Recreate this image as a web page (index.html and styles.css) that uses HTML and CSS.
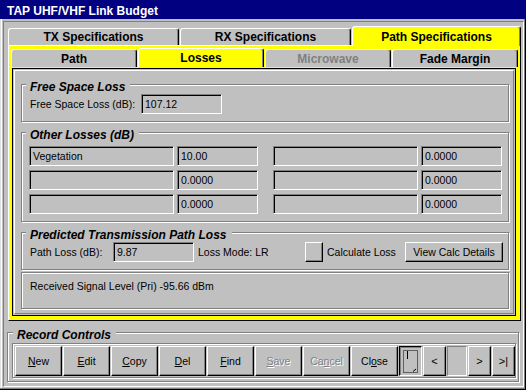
FILE: index.html
```html
<!DOCTYPE html>
<html>
<head>
<meta charset="utf-8">
<title>TAP UHF/VHF Link Budget</title>
<link rel="stylesheet" href="styles.css">
</head>
<body>
<div class="window">
  <div class="titlebar">TAP UHF/VHF Link Budget</div>
  <div class="client">
    <div class="tabs main-tabs">
      <div class="tab">TX Specifications</div>
      <div class="tab">RX Specifications</div>
      <div class="tab active">Path Specifications</div>
    </div>
    <div class="page">
      <div class="tabs sub-tabs">
        <div class="tab">Path</div>
        <div class="tab active">Losses</div>
        <div class="tab disabled">Microwave</div>
        <div class="tab">Fade Margin</div>
      </div>
      <div class="inner-page">
        <div class="inner-frame">
          <div class="group etched g-fsl">
            <div class="group-title">Free Space Loss</div>
            <div class="row">
              <span class="lbl w-fsl">Free Space Loss (dB):</span>
              <div class="field w-val">107.12</div>
            </div>
          </div>
          <div class="group etched g-other">
            <div class="group-title">Other Losses (dB)</div>
            <div class="loss-grid">
              <div class="field">Vegetation</div><div class="field">10.00</div><div></div><div class="field"></div><div class="field">0.0000</div>
              <div class="field"></div><div class="field">0.0000</div><div></div><div class="field"></div><div class="field">0.0000</div>
              <div class="field"></div><div class="field">0.0000</div><div></div><div class="field"></div><div class="field">0.0000</div>
            </div>
          </div>
          <div class="group etched g-pred">
            <div class="group-title">Predicted Transmission Path Loss</div>
            <div class="row">
              <span class="lbl w-pl">Path Loss (dB):</span>
              <div class="field w-val">9.87</div>
              <span class="lbl w-mode">Loss Mode: LR</span>
              <div class="btn chk"></div>
              <span class="lbl w-calc">Calculate Loss</span>
              <div class="btn vcd">View Calc Details</div>
            </div>
          </div>
          <div class="status etched">Received Signal Level (Pri) -95.66 dBm</div>
        </div>
      </div>
    </div>
    <div class="group etched record">
      <div class="group-title">Record Controls</div>
      <div class="rec-frame etched">
        <div class="btn rb"><span><u>N</u>ew</span></div>
        <div class="btn rb"><span><u>E</u>dit</span></div>
        <div class="btn rb"><span><u>C</u>opy</span></div>
        <div class="btn rb"><span><u>D</u>el</span></div>
        <div class="btn rb"><span><u>F</u>ind</span></div>
        <div class="btn rb dis"><span><u>S</u>ave</span></div>
        <div class="btn rb dis"><span>Ca<u>n</u>cel</span></div>
        <div class="btn rb"><span>Cl<u>o</u>se</span></div>
        <div class="btn nb pressed">
          <svg width="19" height="26" viewBox="0 0 19 26">
            <rect x="2.5" y="2.5" width="14" height="22" fill="none" stroke="#000" stroke-width="1" stroke-dasharray="1 1"/>
            <line x1="6.5" y1="3" x2="6.5" y2="11" stroke="#000" stroke-width="1"/>
            <line x1="12" y1="23.5" x2="15" y2="21" stroke="#000" stroke-width="1"/>
          </svg>
        </div>
        <div class="btn nb">&lt;</div>
        <div class="nav-field"></div>
        <div class="btn nb">&gt;</div>
        <div class="btn nb">&gt;|</div>
      </div>
    </div>
  </div>
</div>
</body>
</html>
```

FILE: styles.css
```css
* { box-sizing: border-box; }
html, body { margin: 0; padding: 0; }
body {
  width: 526px;
  height: 390px;
  overflow: hidden;
  background: #c0c0c0;
  font-family: "Liberation Sans", Arial, sans-serif;
  font-size: 10.5px;
  color: #000;
}
.window {
  width: 526px;
  height: 390px;
  display: flex;
  flex-direction: column;
  background: #c0c0c0;
  box-shadow: inset -1px -1px 0 #000, inset -2px -2px 0 #808080, inset 1px 0 0 #dfdfdf, inset 2px 0 0 #fff;
}
.titlebar {
  height: 19px;
  flex: none;
  background: #000080;
  color: #fff;
  font-weight: bold;
  font-size: 12px;
  line-height: 15px;
  padding: 4px 0 0 7px;
  white-space: nowrap;
}
.client {
  flex: 1;
  margin: 2px 2px 3px 3px;
  border: 1px solid;
  border-color: #808080 #fff #fff #808080;
  padding: 4px 0 0 3px;
}

/* tabs */
.tabs { display: flex; align-items: flex-end; gap: 1px; }
.tab {
  display: flex;
  align-items: center;
  justify-content: center;
  background: #c0c0c0;
  border: 1px solid;
  border-bottom: none;
  border-color: #fff #000 transparent #fff;
  box-shadow: inset -1px 0 0 #808080;
  border-radius: 3px 3px 0 0;
  font-weight: bold;
  font-size: 12px;
  white-space: nowrap;
}
.tab.active { background: #ffff00; }
.tab.disabled { color: #808080; }

.main-tabs {
  margin-left: 1px;
  width: 513px;
  height: 20px;
  box-shadow: inset 0 -1px 0 #fff;
}
.main-tabs .tab { width: 171px; height: 17px; margin-bottom: 1px; }
.main-tabs .tab.active { width: 169px; height: 20px; margin-bottom: 0; }

.page {
  margin-left: 1px;
  width: 513px;
  height: 275px;
  background: #ffff00;
  border-left: 1px solid #fff;
  border-right: 1px solid #000;
  border-bottom: 1px solid #000;
  padding: 2px 2px 0 2px;
}
.sub-tabs { height: 19px; }
.sub-tabs .tab { width: 126px; height: 18px; }
.sub-tabs .tab.active { height: 19px; }

.inner-page {
  margin: 1px 0 0 1px;
  width: 504px;
  height: 248px;
  border: 1px solid #000;
  padding: 1px;
  background: #c0c0c0;
}
.inner-frame {
  height: 100%;
  border: 1px solid;
  border-color: #fff #808080 #808080 #fff;
  padding: 13px 3px 0 6px;
  display: flex;
  flex-direction: column;
}

/* group boxes */
.etched {
  border: 1px solid #808080;
  box-shadow: inset 1px 1px 0 #fff, 1px 1px 0 #fff;
}
.group { position: relative; width: 488px; flex: none; }
.group-title {
  position: absolute;
  top: -4px;
  left: 4px;
  padding: 0 5px 0 4px;
  background: #c0c0c0;
  font-weight: bold;
  font-style: italic;
  font-size: 12px;
  line-height: 12px;
  white-space: nowrap;
}
.g-fsl { height: 38px; padding: 9px 0 0 8px; }
.g-other { height: 90px; margin-top: 10px; padding: 13px 0 0 7px; }
.g-pred { height: 38px; margin-top: 10px; padding: 9px 0 0 8px; }
.status {
  width: 488px;
  height: 37px;
  margin-top: 2px;
  padding: 7px 0 0 8px;
  line-height: 13px;
  white-space: nowrap;
}

.row { display: flex; align-items: center; height: 20px; }
.lbl { white-space: nowrap; flex: none; }
.w-fsl { width: 111px; }
.w-pl { width: 83px; }
.w-mode { width: 111px; padding-left: 4px; }
.w-calc { width: 82px; padding-left: 4px; }

.field {
  height: 20px;
  border: 1px solid;
  border-color: #808080 #fff #fff #808080;
  box-shadow: inset 1px 1px 0 #000;
  padding: 0 0 0 3px;
  line-height: 18px;
  white-space: nowrap;
  overflow: hidden;
  background: #c0c0c0;
}
.w-val { width: 81px; flex: none; }

.loss-grid {
  display: grid;
  grid-template-columns: 145px 81px 9px 145px 81px;
  grid-auto-rows: 20px;
  column-gap: 3px;
  row-gap: 4px;
}

/* buttons */
.btn {
  display: flex;
  align-items: center;
  justify-content: center;
  background: #c0c0c0;
  border: 1px solid;
  border-color: #fff #000 #000 #fff;
  box-shadow: inset -1px -1px 0 #808080;
  white-space: nowrap;
  flex: none;
}
.chk { width: 18px; height: 20px; }
.vcd { width: 98px; height: 20px; }

.record {
  width: 512px;
  height: 50px;
  margin-top: 11px;
  padding: 10px 0 0 4px;
}
.record .group-title { left: 5px; }
.rec-frame {
  width: 504px;
  height: 35px;
  padding: 2px 1px 1px 2px;
  display: flex;
  gap: 1px;
}
.rb { width: 47px; height: 30px; }
.nb { width: 23px; height: 30px; font-size: 11px; }
.dis { color: #808080; }
.dis span { text-shadow: 1px 1px 0 #fff; }
.pressed {
  border-color: #000 #fff #fff #000;
  box-shadow: inset 1px 1px 0 #808080;
}
.nav-field {
  width: 20px;
  height: 30px;
  flex: none;
  border: 1px solid;
  border-color: #808080 #fff #fff #808080;
}
```
